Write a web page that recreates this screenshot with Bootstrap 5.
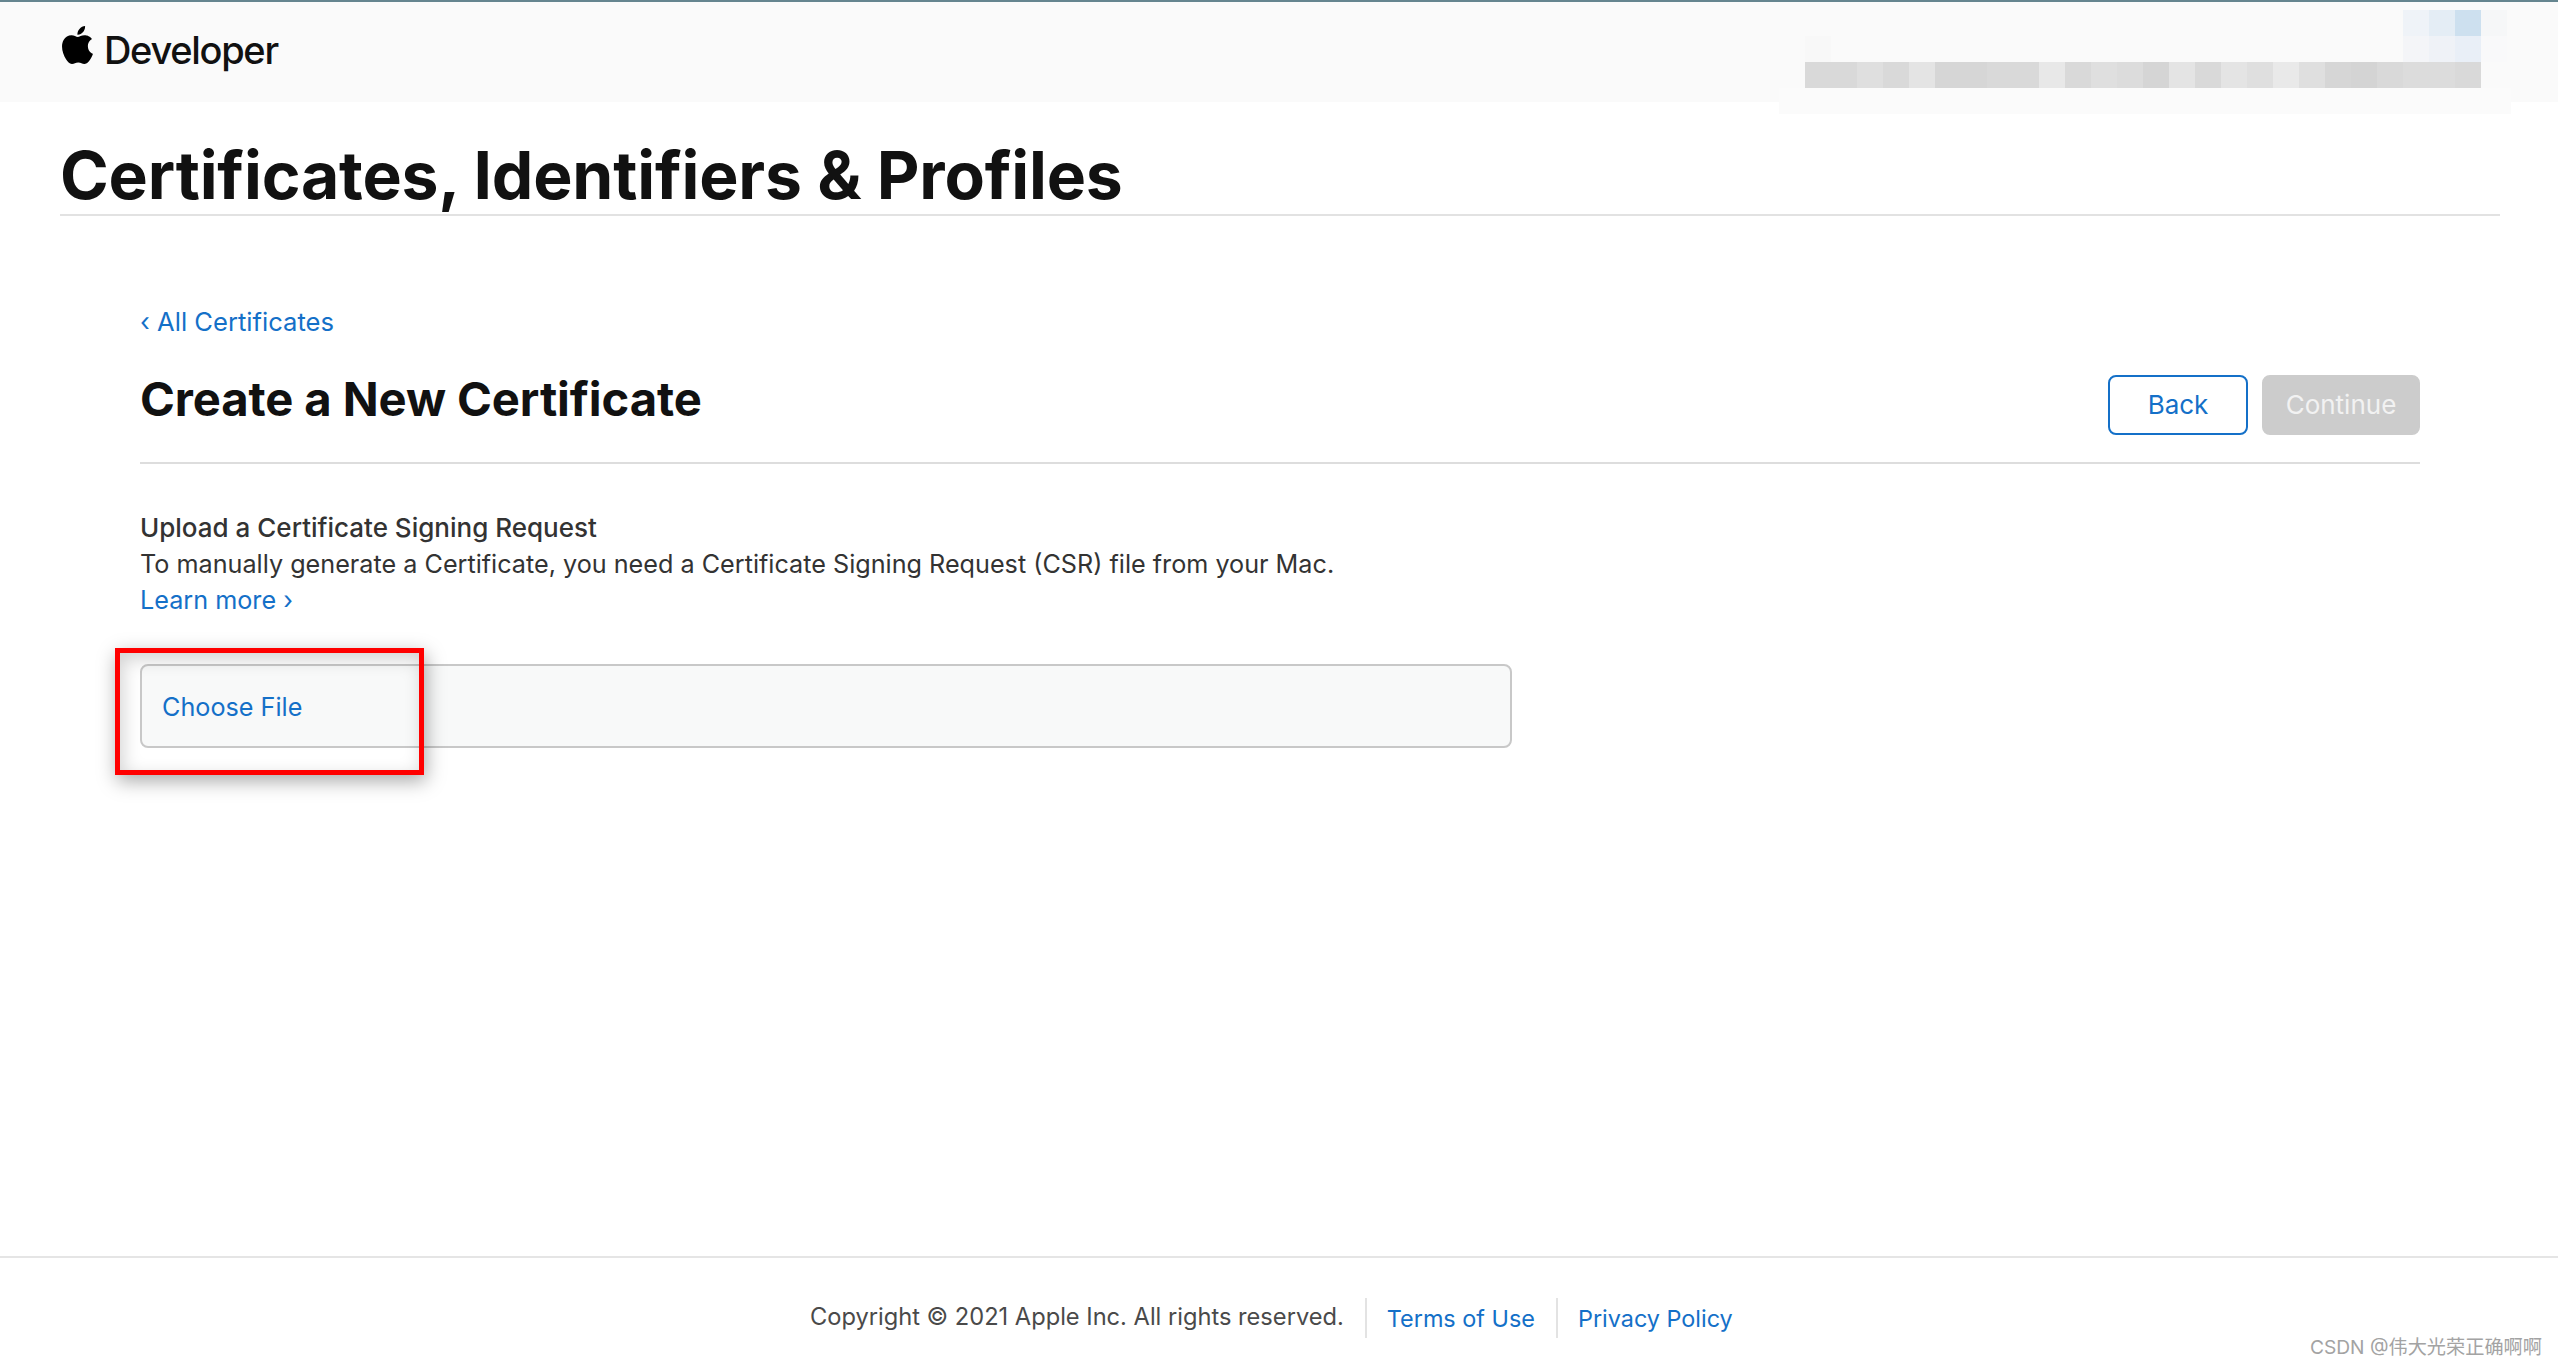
<!DOCTYPE html>
<html lang="en">
<head>
<meta charset="utf-8">
<title>Certificates, Identifiers &amp; Profiles</title>
<link href="https://cdn.jsdelivr.net/npm/bootstrap@5.3.0/dist/css/bootstrap.min.css" rel="stylesheet">
<style>
html,body{height:100%}
body{font-family:Inter,"Noto Sans",sans-serif;color:#333;background:#fff;font-size:25.2px;line-height:36px;min-height:1364px;overflow:hidden}
a{color:#1470c8;text-decoration:none}
.topbar{height:102px;border-top:2px solid #65858f;background:#fafafa;padding-left:62px;position:relative}
.brand-name{font-size:38px;font-weight:500;color:#111;letter-spacing:-1.3px;margin-left:11px;line-height:44px;margin-top:-4px}
.apple-mark{width:31px;height:38px;margin-top:-14px}
.mosaic{position:absolute;left:1779px;top:6px}
.title-zone{margin:0 58px 0 60px;border-bottom:2px solid #e2e2e2;height:114px;padding-top:33px}
.page-title{font-size:66px;line-height:80px;font-weight:700;color:#111;margin:0;letter-spacing:-.2px;white-space:nowrap}
.content-zone{padding:89px 138px 0 140px}
.crumb{line-height:36px;height:36px;margin-top:-1px;font-size:25.6px}
.head-row{height:89px;border-bottom:2px solid #ddd;margin-top:35px}
.sub-title{font-size:47.2px;line-height:56px;font-weight:700;color:#111;margin:0;letter-spacing:-.1px;margin-top:-4px}
.btn-pair{gap:14px}
.act-btn{height:60px;font-size:26px;line-height:56px;padding:0;border-radius:8px;border:2px solid}
.act-back{width:140px;color:#1470c8;border-color:#1470c8;background:#fff}
.act-next{width:158px;color:#f2f2f2;background:#ccc;border-color:#ccc;opacity:1}
.act-next:disabled{color:#f2f2f2;background:#ccc;border-color:#ccc;opacity:1}
.intro{margin-top:46px;width:1600px}
.intro-head{font-weight:500;color:#333;font-size:26px}
.file-zone{margin-top:46px;width:1372px;height:84px;border:2px solid #c8c8c8;border-radius:8px;background:#f8f9f9;padding:2px 0 0 20px;position:relative}
.red-frame{position:absolute;left:-27px;top:-18px;width:309px;height:127px;border:5px solid #f00;box-shadow:2px 6px 18px rgba(0,0,0,.34),inset 3px 6px 18px rgba(0,0,0,.18);pointer-events:none}
.foot-zone{border-top:2px solid #e5e5e5;height:108px;position:relative}
.foot-row{height:40px;margin-top:40px;padding-left:810px;font-size:23.65px;color:#4a4a4a}
.foot-sep{border-left:2px solid #e3e3e3;height:40px;padding-left:20px;margin-left:21px;line-height:42px;font-size:23.4px}
.foot-copy{line-height:38px}
.mark-csdn{position:absolute;right:16px;top:75px;font-size:19.2px;line-height:28px;color:#a3a3a3;font-family:Inter,"Noto Sans CJK SC",sans-serif}
</style>
</head>
<body class="d-flex flex-column">
<header class="topbar d-flex align-items-center">
  <svg class="apple-mark" viewBox="2.5 0 19 24" xmlns="http://www.w3.org/2000/svg" aria-hidden="true"><path fill="#000" d="M12.152 6.896c-.948 0-2.415-1.078-3.96-1.04-2.04.027-3.91 1.183-4.961 3.014-2.117 3.675-.546 9.103 1.519 12.09 1.013 1.454 2.208 3.09 3.792 3.039 1.52-.065 2.09-.987 3.935-.987 1.831 0 2.35.987 3.96.948 1.637-.026 2.676-1.48 3.676-2.948 1.156-1.688 1.636-3.325 1.662-3.415-.039-.013-3.182-1.221-3.22-4.857-.026-3.04 2.48-4.494 2.597-4.559-1.429-2.09-3.623-2.324-4.39-2.376-2-.156-3.675 1.09-4.61 1.09zM15.53 3.83c.843-1.012 1.4-2.427 1.245-3.83-1.207.052-2.662.805-3.532 1.818-.78.896-1.454 2.338-1.273 3.714 1.338.104 2.715-.688 3.559-1.701"/></svg>
  <span class="brand-name">Developer</span>
  <svg class="mosaic" width="732" height="106" xmlns="http://www.w3.org/2000/svg" aria-hidden="true">
    <rect x="0" y="80" width="732" height="26" fill="#fbfbfb"/>
    <rect x="624" y="2" width="26" height="26" fill="#eff3f8"/><rect x="650" y="2" width="26" height="26" fill="#e4edf5"/><rect x="676" y="2" width="26" height="26" fill="#cde0ef"/><rect x="702" y="2" width="26" height="26" fill="#f6f7f8"/>
    <rect x="26" y="28" width="26" height="26" fill="#f8f8f8"/><rect x="624" y="28" width="26" height="26" fill="#f4f5f8"/><rect x="650" y="28" width="26" height="26" fill="#eff2f7"/><rect x="676" y="28" width="26" height="26" fill="#e9eff7"/><rect x="702" y="28" width="26" height="26" fill="#f9f9fa"/>
    <rect x="26" y="54" width="26" height="26" fill="#d9d9d9"/><rect x="52" y="54" width="26" height="26" fill="#d9d9d9"/><rect x="78" y="54" width="26" height="26" fill="#dfdfdf"/><rect x="104" y="54" width="26" height="26" fill="#d9d9d9"/><rect x="130" y="54" width="26" height="26" fill="#e4e4e4"/><rect x="156" y="54" width="26" height="26" fill="#d6d6d6"/><rect x="182" y="54" width="26" height="26" fill="#d6d6d6"/><rect x="208" y="54" width="26" height="26" fill="#d9d9d9"/><rect x="234" y="54" width="26" height="26" fill="#d9d9d9"/><rect x="260" y="54" width="26" height="26" fill="#e8e8e8"/><rect x="286" y="54" width="26" height="26" fill="#d9d9d9"/><rect x="312" y="54" width="26" height="26" fill="#dfdfdf"/><rect x="338" y="54" width="26" height="26" fill="#dcdcdc"/><rect x="364" y="54" width="26" height="26" fill="#d5d5d5"/><rect x="390" y="54" width="26" height="26" fill="#e4e4e4"/><rect x="416" y="54" width="26" height="26" fill="#d9d9d9"/><rect x="442" y="54" width="26" height="26" fill="#e4e4e4"/><rect x="468" y="54" width="26" height="26" fill="#dfdfdf"/><rect x="494" y="54" width="26" height="26" fill="#e9e9e9"/><rect x="520" y="54" width="26" height="26" fill="#dfdfdf"/><rect x="546" y="54" width="26" height="26" fill="#d6d6d6"/><rect x="572" y="54" width="26" height="26" fill="#d4d4d4"/><rect x="598" y="54" width="26" height="26" fill="#d9d9d9"/><rect x="624" y="54" width="26" height="26" fill="#dcdcdc"/><rect x="650" y="54" width="26" height="26" fill="#dcdcdc"/><rect x="676" y="54" width="26" height="26" fill="#d9d9d9"/>
  </svg>
</header>
<div class="title-zone">
  <h1 class="page-title">Certificates, Identifiers &amp; Profiles</h1>
</div>
<main class="content-zone flex-grow-1">
  <div class="crumb"><a href="#">‹ All Certificates</a></div>
  <div class="head-row d-flex justify-content-between">
    <h2 class="sub-title">Create a New Certificate</h2>
    <div class="btn-pair d-flex align-self-start">
      <button type="button" class="btn act-btn act-back">Back</button>
      <button type="button" class="btn act-btn act-next" disabled>Continue</button>
    </div>
  </div>
  <div class="intro">
    <div class="intro-head">Upload a Certificate Signing Request</div>
    <div>To manually generate a Certificate, you need a Certificate Signing Request (CSR) file from your Mac.</div>
    <div><a href="#">Learn more ›</a></div>
  </div>
  <div class="file-zone d-flex align-items-center">
    <a href="#">Choose File</a>
    <div class="red-frame"></div>
  </div>
</main>
<footer class="foot-zone">
  <div class="foot-row d-flex">
    <span class="foot-copy">Copyright © 2021 Apple Inc. All rights reserved.</span>
    <a class="foot-sep" href="#">Terms of Use</a>
    <a class="foot-sep" href="#">Privacy Policy</a>
  </div>
  <div class="mark-csdn">CSDN @伟大光荣正确啊啊</div>
</footer>
<script src="https://cdn.jsdelivr.net/npm/bootstrap@5.3.0/dist/js/bootstrap.bundle.min.js"></script>
</body>
</html>
